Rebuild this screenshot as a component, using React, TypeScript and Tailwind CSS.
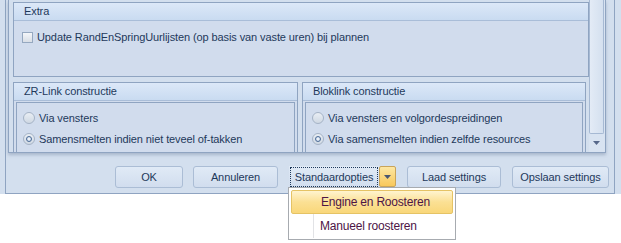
import React from "react";

function Radio({ checked }: { checked?: boolean }) {
  return (
    <span className="w-[12px] h-[12px] rounded-full border border-[#a5b3c6] bg-[linear-gradient(#e9eef4,#cfd8e3)] flex items-center justify-center shrink-0">
      {checked ? (
        <span className="w-[6px] h-[6px] rounded-full border border-[#4a6a96] bg-[radial-gradient(circle,#ffffff,#b8cbe4)]" />
      ) : null}
    </span>
  );
}

function Group({ title, children, className }: { title: string; children: React.ReactNode; className?: string }) {
  return (
    <div className={"border border-[#8fa4c1] bg-[#d1dced] flex flex-col shrink-0 " + (className ?? "")}>
      <div className="h-[18px] shrink-0 bg-[linear-gradient(#dce8f8,#c9dbf1)] border-b border-[#a9bdd8] flex items-center pl-[10px] leading-none">
        {title}
      </div>
      {children}
    </div>
  );
}

function Btn({ label, w, className }: { label: string; w: string; className?: string }) {
  return (
    <div
      className={
        "h-[22px] rounded-[3px] border border-[#abbdd5] bg-[linear-gradient(#e0eaf6,#d1ddee)] flex items-center justify-center " +
        w +
        " " +
        (className ?? "")
      }
    >
      {label}
    </div>
  );
}

export default function App() {
  return (
    <div className="w-[621px] h-[243px] bg-white relative overflow-hidden font-['Liberation_Sans',sans-serif] text-[11px] tracking-[-0.1px] text-[#1e395b]">
      <div className="h-[194px] bg-[#d3dfee] pl-[5px] pr-[6px] flex">
        <div className="flex-1 border-l border-r border-b border-[#8fa4c1] flex flex-col">
          {/* scroll viewport */}
          <div className="ml-[2px] mr-[8px] h-[153px] shrink-0 border-l border-r border-b border-[#8fa4c1] flex overflow-hidden shadow-[0_2px_3px_rgba(90,110,140,0.35)]">
            <div className="w-[580px] pl-[4px] flex flex-col overflow-hidden">
              <Group title="Extra" className="mt-[2px] h-[75px]">
                <div className="flex items-center pl-[8px] pt-[8px] gap-[4px]">
                  <span className="w-[11px] h-[11px] border border-[#95a8c0] bg-[linear-gradient(#f4f6f9,#d8dee6)] shrink-0" />
                  <span>Update RandEnSpringUurlijsten (op basis van vaste uren) bij plannen</span>
                </div>
              </Group>
              <div className="mt-[5px] flex gap-[4px] pr-[3px] shrink-0">
                <Group title="ZR-Link constructie" className="w-[285px] h-[90px]">
                  <div className="mx-[2px] mt-[1px] flex-1 border-l border-t border-r border-[#8fa4c1] flex flex-col pl-[6px] pt-[9px] gap-[9px]">
                    <div className="flex items-center gap-[4px] h-[12px]">
                      <Radio />
                      <span>Via vensters</span>
                    </div>
                    <div className="flex items-center gap-[4px] h-[12px]">
                      <Radio checked />
                      <span>Samensmelten indien niet teveel of-takken</span>
                    </div>
                  </div>
                </Group>
                <Group title="Bloklink constructie" className="w-[284px] h-[90px]">
                  <div className="mx-[2px] mt-[1px] flex-1 border-l border-t border-r border-[#8fa4c1] flex flex-col pl-[6px] pt-[9px] gap-[9px]">
                    <div className="flex items-center gap-[4px] h-[12px]">
                      <Radio />
                      <span>Via vensters en volgordespreidingen</span>
                    </div>
                    <div className="flex items-center gap-[4px] h-[12px]">
                      <Radio checked />
                      <span>Via samensmelten indien zelfde resources</span>
                    </div>
                  </div>
                </Group>
              </div>
            </div>
            {/* scrollbar */}
            <div className="w-[16px] bg-[#d8e3f1] flex flex-col">
              <div className="h-[134px] shrink-0 border border-t-0 border-[#a6b9d3] rounded-b-[2px] bg-[linear-gradient(90deg,#e3ebf6,#d4e0ef)] mr-[1px]" />
              <div className="flex-1 flex items-center justify-center pr-[1px]">
                <svg width="7" height="4" viewBox="0 0 7 4">
                  <path d="M0 0H7L3.5 4Z" fill="#56688a" />
                </svg>
              </div>
            </div>
          </div>
          {/* buttons */}
          <div className="mt-[13px] flex pl-[109px]">
            <Btn label="OK" w="w-[68px]" />
            <Btn label="Annuleren" w="w-[85px]" className="ml-[10px]" />
            <div className="ml-[11px] h-[22px] w-[90px] bg-[linear-gradient(#e0eaf6,#d1ddee)] p-[1px]">
              <div className="h-full border border-dotted border-[#1e395b] flex items-center justify-center">
                Standaardopties
              </div>
            </div>
            <div className="h-[21px] w-[17px] rounded-[2px] border border-[#c9a45a] bg-[linear-gradient(#fde7a3,#f8c85c)] flex items-center justify-center">
              <svg width="7" height="4" viewBox="0 0 7 4">
                <path d="M0 0H7L3.5 4Z" fill="#4a5670" />
              </svg>
            </div>
            <Btn label="Laad settings" w="w-[94px]" className="ml-[11px]" />
            <Btn label="Opslaan settings" w="w-[97px]" className="ml-[11px]" />
          </div>
        </div>
      </div>
      {/* dropdown menu */}
      <div className="absolute left-[288px] top-[187px] w-[168px] h-[53px] bg-white border border-[#a7abb0] p-[2px] flex flex-col text-[12px] text-[#4d1546] tracking-[-0.2px]">
        <div className="h-[24px] shrink-0 rounded-[2px] border border-[#e5c365] bg-[linear-gradient(#fff4cf,#fbe094_50%,#f9d77a)] flex items-center pl-[29px]">
          Engine en Roosteren
        </div>
        <div className="h-[24px] shrink-0 flex items-center">
          <div className="w-[23px] self-stretch border-r border-[#e2e3e6]" />
          <span className="pl-[6px]">Manueel roosteren</span>
        </div>
      </div>
    </div>
  );
}
